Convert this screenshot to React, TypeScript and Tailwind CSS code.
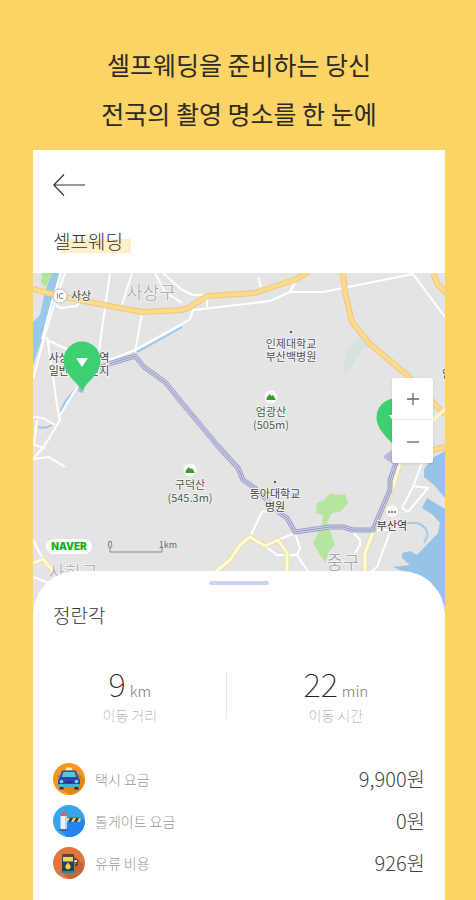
import type { ReactNode } from 'react';

interface Fare {
  id: string;
  label: string;
  price: string;
  icon: ReactNode;
}

interface MapLabel {
  x: number;
  y: number;
  lines: string[];
  className: string;
}

function TaxiIcon() {
  return (
    <svg viewBox="0 0 32 32" className="size-8 shrink-0" aria-hidden="true">
      <circle cx="16" cy="16" r="16" fill="#f9971c" />
      <path d="M25 10 32 17A16 16 0 0 1 17 32L7 24Z" fill="#d9780f" opacity=".6" />
      <rect x="13" y="4.500" width="6" height="3" rx="1" fill="#fff3c9" />
      <path d="M9 7.500h14l3 8h-20Z" fill="#3450a8" />
      <path d="M10.500 9h11l1.800 5.500h-14.600Z" fill="#4fd0c5" />
      <path d="M7 14h18l2 3v6H5v-6Z" fill="#3340b0" />
      <rect x="5" y="21" width="22" height="3" rx="1" fill="#41b7c8" />
      <rect x="6.500" y="24" width="4" height="2.500" fill="#20335c" />
      <rect x="21.500" y="24" width="4" height="2.500" fill="#20335c" />
      <circle cx="8.500" cy="18.500" r="1.800" fill="#6ee3e6" />
      <circle cx="23.500" cy="18.500" r="1.800" fill="#6ee3e6" />
      <rect x="12.500" y="18" width="7" height="2" fill="#252e8c" />
      <rect x="4" y="12.500" width="3" height="2" rx="1" fill="#5d8fa3" />
      <rect x="25" y="12.500" width="3" height="2" rx="1" fill="#5d8fa3" />
    </svg>
  );
}

function TollIcon() {
  return (
    <svg viewBox="0 0 32 32" className="size-8 shrink-0" aria-hidden="true">
      <circle cx="16" cy="16" r="16" fill="#36a6ea" />
      <path d="M14 12 28 12 32 17A16 16 0 0 1 14 32L7 25Z" fill="#2585f0" />
      <rect x="9" y="6.500" width="3.500" height="3" rx="1" fill="#ee5868" />
      <path d="M7.500 11q3-3 6 0v14H7.500Z" fill="#eceff7" />
      <path d="M12 10.500l2 .5v14h-2Z" fill="#c4d2e6" />
      <rect x="6" y="24" width="9" height="2" fill="#51669a" />
      <rect x="8" y="9" width="5.500" height="2" fill="#ee5868" />
      <path d="M14 13h14l-1 4H14Z" fill="#f5cc5c" />
      <path d="M17 13h3l-2 4h-3ZM23 13h3l-2 4h-3Z" fill="#2c3f4f" />
    </svg>
  );
}

function FuelIcon() {
  return (
    <svg viewBox="0 0 32 32" className="size-8 shrink-0" aria-hidden="true">
      <circle cx="16" cy="16" r="16" fill="#e0773f" />
      <path d="M21 8 31 18A16 16 0 0 1 16 32L9 26Z" fill="#c46540" />
      <rect x="9" y="7" width="12" height="19" rx="1" fill="#26434f" />
      <rect x="9" y="7" width="12" height="3" fill="#5a4833" />
      <rect x="10" y="10" width="10" height="4.500" fill="#e9d36a" />
      <path d="M15 15.500q-5.500 5.500 0 7Q20.500 21 15 15.500Z" fill="#f2ce55" />
      <rect x="8" y="24" width="14" height="2" fill="#1c8d9a" />
      <path d="M21 12l3 1v5h-2" fill="none" stroke="#3b3d4a" strokeWidth="1.500" />
      <rect x="21.500" y="13" width="2.500" height="2" fill="#d5e1e8" />
    </svg>
  );
}

const fares: Fare[] = [
  { id: 'taxi', label: '택시 요금', price: '9,900원', icon: <TaxiIcon /> },
  { id: 'toll', label: '톨게이트 요금', price: '0원', icon: <TollIcon /> },
  { id: 'fuel', label: '유류 비용', price: '926원', icon: <FuelIcon /> },
];

const trip = [
  { id: 'distance', value: '9', unit: 'km', label: '이동 거리' },
  { id: 'time', value: '22', unit: 'min', label: '이동 시간' },
];

const mapLabels: MapLabel[] = [
  { x: 118, y: 26, lines: ['사상구'], className: 'fill-[#a3a3a3] text-[18px] font-light' },
  { x: 48, y: 27, lines: ['사상'], className: 'fill-[#444] text-[11px]' },
  { x: 46, y: 89, lines: ['사상서부산역', '일반산업단지'], className: 'fill-[#444] text-[11px]' },
  { x: 258, y: 75, lines: ['인제대학교', '부산백병원'], className: 'fill-[#555] text-[11px]' },
  { x: 238, y: 143, lines: ['엄광산', '(505m)'], className: 'fill-[#4b5f4b] text-[11px]' },
  { x: 157, y: 216, lines: ['구덕산', '(545.3m)'], className: 'fill-[#4b5f4b] text-[11px]' },
  { x: 242, y: 225, lines: ['동아대학교', '병원'], className: 'fill-[#444] text-[11px]' },
  { x: 359, y: 257, lines: ['부산역'], className: 'fill-[#333] text-[11px]' },
  { x: 310, y: 296, lines: ['중구'], className: 'fill-[#999] text-[18px] font-light' },
  { x: 40, y: 306, lines: ['사하구'], className: 'fill-[#a3a3a3] text-[18px] font-light' },
  { x: 414, y: 105, lines: ['안'], className: 'fill-[#444] text-[11px]' },
];

const ROUTE =
  'M47 119L50 112L57 98L79 90L102 83L111 94L132 109L149 130L165 149L184 172L205 195L210 207L222 215L247 240L254 245L262 259L297 254L310 254L320 257L340 257L345 245L357 217L357 207L363 190L354 184L362 178';

function Peak({ x, y }: { x: number; y: number }) {
  return (
    <g transform={`translate(${x} ${y})`}>
      <circle r="6.500" fill="#fff" />
      <path d="M-4.500 3V1l3-4 2 2 1.500-1L4.500 2v1Z" fill="#3f9a35" />
    </g>
  );
}

function Pin({ x, y }: { x: number; y: number }) {
  return (
    <g transform={`translate(${x} ${y})`}>
      <path d="M0 29C-3 21-18.500 13-18.500-2A18.500 18.500 0 0 1 18.500-2C18.500 13 3 21 0 29Z" fill="#3ecf70" />
      <path d="M-6-4H6L0 5Z" fill="#fff" />
    </g>
  );
}

function RouteMap() {
  return (
    <svg
      viewBox="0 0 412 340"
      preserveAspectRatio="xMidYMid slice"
      className="block h-full w-full"
      role="img"
      aria-label="이동 경로 지도"
    >
      <rect width="412" height="340" fill="#e4e4e4" />

      {/* Water and parks */}
      <path d="M19 0H26L19 29 9 66 0 92V49L7 42 12 19Z" fill="#9bc7e8" />
      <path d="M9 0H19L13 14 8 10Z" fill="#aee695" />
      <path d="M315 75q10-9 19-13l5 8q-10 4-15 14t-11 17q-5-1-2-12Z" fill="#d5e1e2" />
      <path
        d="M412 178L401 184 391 196 391 204 401 212 412 225V236L394 225 389 235 400 242 407 250 405 260 384 282 377 278 369 280V285L377 292 360 294 374 300 404 340H412Z"
        fill="#96c3e6"
      />
      <path d="M374 250H384Q396 254 394 264L391 270" fill="none" stroke="#a6cbe6" strokeWidth="2" />
      <path
        d="M284 230L291 227 297 220 303 222 312 221 315 230 307 239 299 240 294 249 302 272 296 278 293 290 287 282 280 270 289 252 290 242 283 240Z"
        fill="#b5e69d"
      />
      <g fill="none" stroke="#9bc7e8" strokeWidth="2">
        <path d="M149 54L126 67 104 79M44 114L32 129 27 140M5 154Q13 156 19 152" />
      </g>

      {/* Side streets */}
      <g fill="none" stroke="#fff" strokeWidth="2" strokeLinejoin="round">
        <path d="M32 0L22 29 12 62 0 106M28 0L18 32 9 66" />
        <path d="M99 0L94 16 89 32M77 0L71 42 66 78M109 40L102 79M122 0L132 19 149 30M130 0L149 17 160 22H174" />
        <path d="M22 32L28 35 44 33 47 29M14 67L36 77 79 86 102 77 149 51 157 46 160 37 237 28 257 19 290 19 380 1 412 44" />
        <path d="M225 4L228 14M262 9L257 19M174 24V34M14 64L19 96 24 132 27 147 12 172 0 186 16 184 32 194" />
        <path d="M44 114L27 142M4 147L1 172 12 175M0 144L10 145 22 152M0 267L14 294M0 304L16 310" />
        <path d="M217 264L229 239 238 237M245 267L262 260 267 275 264 282 244 282 232 273M264 282L276 300" />
        <path d="M320 259L327 267V272L322 280M357 259L344 294 336 300M389 190L380 214 369 235 375 239 395 215 380 213M344 257H357" />
      </g>

      {/* Main roads */}
      <g fill="none" strokeLinejoin="round">
        <path
          d="M182 299L197 287 207 272 217 264 232 273 245 267 254 280V300M367 190L359 217 341 257 332 280V300M0 290L10 286 20 298"
          stroke="#eedfa0"
          strokeWidth="5"
        />
        <path
          d="M182 299L197 287 207 272 217 264 232 273 245 267 254 280V300M367 190L359 217 341 257 332 280V300M0 290L10 286 20 298"
          stroke="#fffbd8"
          strokeWidth="3"
        />
        <path
          d="M0 16L26 23 66 31 109 39 149 37 157 34 174 23 222 20 264 6 276-2M310 0L312 19 319 49 337 71 374 102 412 142M400 0L405 12 414 21M397 178L412 174"
          stroke="#efc97b"
          strokeWidth="6"
        />
        <path
          d="M0 16L26 23 66 31 109 39 149 37 157 34 174 23 222 20 264 6 276-2M310 0L312 19 319 49 337 71 374 102 412 142M400 0L405 12 414 21M397 178L412 174"
          stroke="#fbd98d"
          strokeWidth="4"
        />
        <path d="M399 148L412 136" stroke="#fff8bf" strokeWidth="3" />
      </g>

      {/* Route */}
      <g fill="none" strokeLinejoin="round">
        <path d={ROUTE} stroke="#9ea0c4" strokeWidth="5" />
        <path d={ROUTE} stroke="#cdd0ec" strokeWidth="3" />
        <path d={ROUTE} stroke="#9395bb" strokeWidth="1" />
      </g>

      <circle cx="27" cy="23" r="7" fill="#fff" stroke="#bbb" />
      <text x="27" y="26" textAnchor="middle" className="fill-[#666] text-[8px]">IC</text>
      <circle cx="359" cy="238" r="6" fill="#fff" />
      <path d="M355 239H363" stroke="#888" strokeWidth="2" strokeDasharray="2 1" />
      <path d="M257 59h2M241 209h2" stroke="#555" strokeWidth="2" />
      <Peak x={238} y={124} />
      <Peak x={157} y={197} />

      {mapLabels.map((label) => (
        <text
          key={label.lines[0]}
          textAnchor="middle"
          stroke="#f3f3f3"
          strokeWidth="2"
          paintOrder="stroke"
          className={label.className}
        >
          {label.lines.map((line, idx) => (
            <tspan key={line} x={label.x} y={label.y + idx * 13}>
              {line}
            </tspan>
          ))}
        </text>
      ))}

      <Pin x={49} y={89} />
      <Pin x={362} y={146} />

      {/* Scale */}
      <rect x="13" y="266" width="46" height="15" rx="7.500" fill="#fff" />
      <text x="36" y="277" textAnchor="middle" className="fill-[#19b01e] font-[Inter] text-[10px] font-black">
        NAVER
      </text>
      <path d="M77 275V279H129V275" fill="none" stroke="#888" />
      <text x="77" y="275" textAnchor="middle" className="fill-[#666] text-[9px]">0</text>
      <text x="135" y="275" textAnchor="middle" className="fill-[#666] text-[9px]">1km</text>
    </svg>
  );
}

export default function App() {
  return (
    <div className="flex min-h-screen flex-col bg-[#fcd465] pr-[31px] pl-[33px] font-['Noto_Sans_CJK_KR',sans-serif]">
      <h1 className="pt-10 pb-3 text-center text-[25px] leading-[49px] text-[#2b2a26]">
        셀프웨딩을 준비하는 당신
        <br />
        전국의 촬영 명소를 한 눈에
      </h1>

      <main className="flex flex-1 flex-col bg-white">
        <header className="px-5 pt-6 pb-5">
          <button type="button" aria-label="뒤로" className="block">
            <svg viewBox="0 0 32 22" className="h-[22px] w-8" fill="none" stroke="#333" strokeWidth="1.200">
              <path d="M11 .5L.8 11 11 21.500M1 11H32" />
            </svg>
          </button>
          <h2 className="mt-8 flex text-[19px] leading-[25px] font-light text-[#333]">
            <span className="relative isolate">
              셀프웨딩
              <span className="absolute -right-2 bottom-0 left-2 -z-10 h-[14px] bg-[#fff0c8]" />
            </span>
          </h2>
        </header>

        {/* Map */}
        <section className="relative h-[340px]">
          <RouteMap />
          <div className="absolute top-[105px] right-3 flex w-[41px] flex-col divide-y divide-gray-200 rounded-xs bg-white shadow">
            <button type="button" aria-label="확대" className="flex h-[42px] items-center justify-center">
              <svg viewBox="0 0 12 12" className="size-3" stroke="#666" strokeWidth="1.300">
                <path d="M6 0V12M0 6H12" />
              </svg>
            </button>
            <button type="button" aria-label="축소" className="flex h-[43px] items-center justify-center">
              <svg viewBox="0 0 12 12" className="size-3" stroke="#666" strokeWidth="1.300">
                <path d="M0 6H12" />
              </svg>
            </button>
          </div>
        </section>

        {/* Bottom sheet */}
        <section className="relative -mt-[42px] rounded-t-[44px] bg-white px-5 pt-[10px] pb-4">
          <div className="mx-auto h-1 w-15 rounded-full bg-[#c9d4f8]" />
          <h3 className="mt-4 text-[19px] leading-7 font-light text-[#333]">정란각</h3>

          <dl className="-mx-5 mt-[34px] flex">
            {trip.map((item) => (
              <div
                key={item.id}
                className="relative flex w-[53%] flex-col-reverse items-center first:w-[47%] first:after:absolute first:after:inset-y-2 first:after:right-0 first:after:w-px first:after:bg-gray-200"
              >
                <dt className="text-[14px] leading-6 font-thin text-[#999]">{item.label}</dt>
                <dd className="flex items-baseline gap-1 text-[33px] leading-10 font-thin text-[#222]">
                  {item.value}
                  <span className="text-[15px] leading-none font-light text-[#777]">{item.unit}</span>
                </dd>
              </div>
            ))}
          </dl>

          <ul className="mt-9 flex flex-col gap-[10px]">
            {fares.map((fare) => (
              <li key={fare.id} className="flex h-8 items-center">
                {fare.icon}
                <span className="ml-[10px] text-[14px] font-light text-[#999]">{fare.label}</span>
                <span className="ml-auto text-[20px] font-light text-[#444]">{fare.price}</span>
              </li>
            ))}
          </ul>
        </section>
      </main>
    </div>
  );
}
